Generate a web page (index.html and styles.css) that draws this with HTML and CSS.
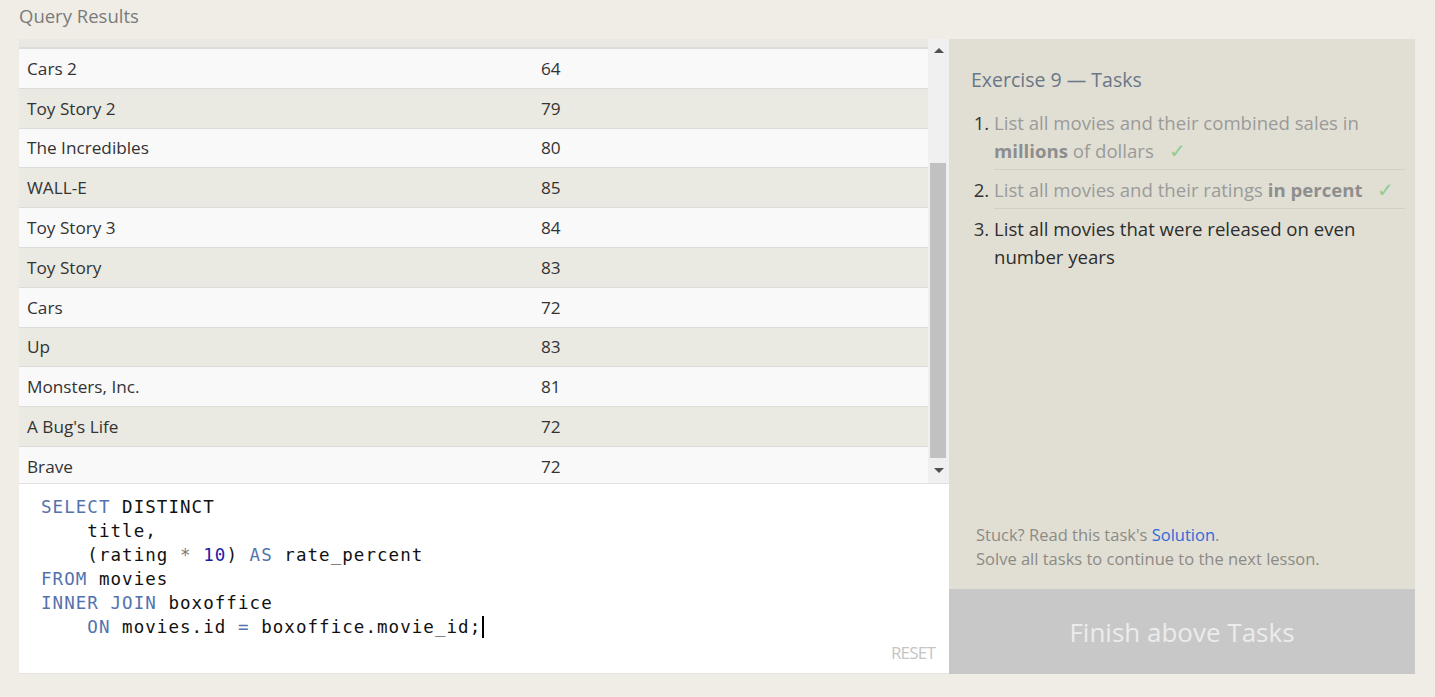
FILE: index.html
```html
<!DOCTYPE html>
<html>
<head>
<meta charset="utf-8">
<link rel="stylesheet" href="styles.css">
</head>
<body>
<div class="page">
  <div class="section-title">Query Results</div>
  <div class="workspace">
    <div class="left">
      <div class="results">
        <div class="table-wrap">
          <div class="thead"></div>
          <div class="row"><div class="c1">Cars 2</div><div class="c2">64</div></div>
          <div class="row alt"><div class="c1">Toy Story 2</div><div class="c2">79</div></div>
          <div class="row"><div class="c1">The Incredibles</div><div class="c2">80</div></div>
          <div class="row alt"><div class="c1">WALL-E</div><div class="c2">85</div></div>
          <div class="row"><div class="c1">Toy Story 3</div><div class="c2">84</div></div>
          <div class="row alt"><div class="c1">Toy Story</div><div class="c2">83</div></div>
          <div class="row"><div class="c1">Cars</div><div class="c2">72</div></div>
          <div class="row alt"><div class="c1">Up</div><div class="c2">83</div></div>
          <div class="row"><div class="c1">Monsters, Inc.</div><div class="c2">81</div></div>
          <div class="row alt"><div class="c1">A Bug's Life</div><div class="c2">72</div></div>
          <div class="row"><div class="c1">Brave</div><div class="c2">72</div></div>
        </div>
        <div class="scrollbar">
          <div class="arrow up"></div>
          <div class="track"><div class="thumb"></div></div>
          <div class="arrow down"></div>
        </div>
      </div>
      <div class="editor">
        <div class="code">
          <div class="line"><span class="kw">SELECT</span> DISTINCT</div>
          <div class="line">    title,</div>
          <div class="line">    (rating <span class="op">*</span> <span class="num">10</span>) <span class="kw">AS</span> rate_percent</div>
          <div class="line"><span class="kw">FROM</span> movies</div>
          <div class="line"><span class="kw">INNER JOIN</span> boxoffice</div>
          <div class="line">    <span class="kw">ON</span> movies.id <span class="kw">=</span> boxoffice.movie_id;<span class="cursor"></span></div>
        </div>
        <div class="reset">RESET</div>
      </div>
    </div>
    <div class="right">
      <div class="tasks">
        <h2 class="tasks-title">Exercise 9 — Tasks</h2>
        <ol class="task-list">
          <li class="done">List all movies and their combined sales in <b>millions</b> of dollars <span class="check">✓</span></li>
          <li class="done">List all movies and their ratings <b>in percent</b> <span class="check">✓</span></li>
          <li class="todo">List all movies that were released on even number years</li>
        </ol>
        <div class="help">
          <div>Stuck? Read this task's <a class="link">Solution</a>.</div>
          <div>Solve all tasks to continue to the next lesson.</div>
        </div>
      </div>
      <div class="finish">Finish above Tasks</div>
    </div>
  </div>
</div>
</body>
</html>
```

FILE: styles.css
```css
html, body {
  margin: 0;
  padding: 0;
  background: #efede6;
  font-family: "Open Sans", "Noto Sans", sans-serif;
}

.page {
  padding: 0 20px 0 19px;
  height: 697px;
  box-sizing: border-box;
}

.section-title {
  font-size: 18.5px;
  line-height: 24px;
  color: #7b7b7b;
  padding-top: 4px;
  height: 39px;
  box-sizing: border-box;
}

.workspace {
  display: flex;
  height: 635px;
}

.left {
  width: 930px;
  display: flex;
  flex-direction: column;
}

.results {
  height: 445px;
  display: flex;
  overflow: hidden;
  border-bottom: 1px solid #e2e1dc;
  box-sizing: border-box;
}

.table-wrap {
  flex: 1;
  overflow: hidden;
}

.thead {
  height: 8px;
  background: #e9e8e1;
  border-bottom: 2px solid #dcdcda;
}

.row {
  display: flex;
  height: 38.8px;
  align-items: center;
  background: #f9f9f9;
  border-bottom: 1px solid #dcdcd8;
  font-size: 17.2px;
  color: #333;
}

.row.alt {
  background: #eae9e2;
}

.c1 {
  width: 514px;
  padding-left: 8px;
}

.scrollbar {
  width: 21px;
  background: #f0f0f0;
  display: flex;
  flex-direction: column;
  align-items: center;
}

.arrow {
  width: 0;
  height: 0;
  border-left: 5px solid transparent;
  border-right: 5px solid transparent;
}

.arrow.up {
  border-bottom: 5px solid #505050;
  margin-top: 9px;
}

.arrow.down {
  border-top: 5px solid #505050;
  margin-bottom: 10px;
}

.track {
  flex: 1;
  width: 100%;
  position: relative;
}

.thumb {
  position: absolute;
  left: 2px;
  right: 3px;
  top: 110px;
  height: 295px;
  background: #c1c1c1;
}

.editor {
  flex: 1;
  background: #ffffff;
  display: flex;
  flex-direction: column;
  border-bottom: 1px solid #e4e3dd;
}

.code {
  padding: 11px 0 0 22px;
  font-family: "DejaVu Sans Mono", "Liberation Mono", monospace;
  font-size: 17.5px;
  letter-spacing: 1.05px;
  color: #111;
}

.line {
  height: 24px;
  line-height: 24px;
  white-space: pre;
}

.kw {
  color: #5472ad;
}

.num {
  color: #1c1ca8;
}

.op {
  color: #777;
}

.cursor {
  display: inline-block;
  width: 2px;
  height: 22px;
  background: #000;
  vertical-align: -5px;
  margin-left: 1px;
}

.reset {
  margin-top: auto;
  align-self: flex-end;
  margin-right: 14px;
  margin-bottom: 9px;
  font-size: 17px;
  line-height: 22px;
  letter-spacing: -0.8px;
  color: #c5c5c5;
}

.right {
  width: 466px;
  display: flex;
  flex-direction: column;
}

.tasks {
  flex: 1;
  background: #e1dfd4;
  padding: 27px 10px 18px 22px;
  display: flex;
  flex-direction: column;
}

.tasks-title {
  margin: 0;
  font-size: 19.5px;
  line-height: 28px;
  font-weight: 400;
  color: #6a7787;
}

.task-list {
  margin: 9px 0 0 0;
  padding-left: 23px;
  font-size: 18.6px;
  line-height: 28px;
}

.task-list li {
  padding: 6px 0 4px 0;
  border-bottom: 1px solid #d2d0c6;
}

.task-list li:last-child {
  border-bottom: none;
}

.task-list li::marker {
  color: #333;
}

.done {
  color: #9a9a9a;
}

.done b {
  color: #8e8e8e;
}

.todo {
  color: #2d2d2d;
}

.check {
  color: #92cc92;
  font-size: 20px;
  line-height: 0;
  margin-left: 10px;
}

.help {
  margin-top: auto;
  padding-left: 5px;
  font-size: 16.5px;
  line-height: 24px;
  color: #8d8a85;
}

.link {
  color: #2f6ad8;
}

.finish {
  height: 85px;
  background: #c8c8c8;
  color: #ececec;
  font-size: 26px;
  display: flex;
  align-items: center;
  justify-content: center;
}
```
